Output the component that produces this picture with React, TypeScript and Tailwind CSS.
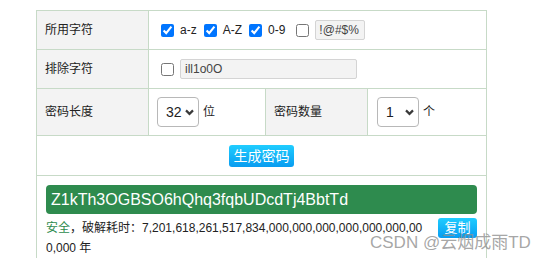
import { useState } from "react";

const font = "font-['Liberation_Sans','Noto_Sans_CJK_SC',sans-serif]";

function Chevron() {
  return (
    <svg width="9" height="7" viewBox="0 0 9 7" className="absolute right-[5px] top-[12px] pointer-events-none">
      <path d="M1 1.4 L4.5 4.9 L8 1.4" fill="none" stroke="#3a3a3a" strokeWidth="2.2" />
    </svg>
  );
}

function Select({ value, options, width }: { value: string; options: string[]; width: string }) {
  return (
    <div className={`relative inline-block ${width}`}>
      <select
        defaultValue={value}
        className="appearance-none w-full h-[30px] rounded-[4px] border border-[#b8b8b8] bg-white pl-[8px] text-[14px] text-[#222] outline-none"
      >
        {options.map((o) => (
          <option key={o}>{o}</option>
        ))}
      </select>
      <Chevron />
    </div>
  );
}

function Check({ on, onChange }: { on: boolean; onChange: () => void }) {
  return <input type="checkbox" checked={on} onChange={onChange} className="w-[13px] h-[13px] m-0 accent-[#0075ff]" />;
}

export default function App() {
  const [az, setAz] = useState(true);
  const [AZ, setAZ] = useState(true);
  const [num, setNum] = useState(true);
  const [sym, setSym] = useState(false);
  const [ex, setEx] = useState(false);

  const cell = "border border-[#c7dac7]";
  const label = `${cell} bg-[#f3f3f3] pl-[8px] text-[12px] text-[#222]`;

  return (
    <div className={`relative w-[560px] h-[258px] overflow-hidden bg-white ${font}`}>
      <table className="ml-[36px] mt-[10px] w-[450px] border-collapse table-fixed">
        <colgroup>
          <col className="w-[112px]" />
          <col className="w-[117px]" />
          <col className="w-[102px]" />
          <col className="w-[119px]" />
        </colgroup>
        <tbody>
          <tr className="h-[39px]">
            <td className={label}>所用字符</td>
            <td colSpan={3} className={`${cell} pl-[12px]`}>
              <div className="flex items-center text-[12px] text-[#222]">
                <Check on={az} onChange={() => setAz(!az)} />
                <span className="ml-[6px] mr-[7px]">a-z</span>
                <Check on={AZ} onChange={() => setAZ(!AZ)} />
                <span className="ml-[6px] mr-[7px]">A-Z</span>
                <Check on={num} onChange={() => setNum(!num)} />
                <span className="ml-[6px] mr-[11px]">0-9</span>
                <Check on={sym} onChange={() => setSym(!sym)} />
                <input
                  defaultValue="!@#$%"
                  className="ml-[6px] w-[50px] h-[20px] border border-[#d4d4d4] rounded-[2px] bg-[#f3f3f3] px-[3px] text-[12px] text-[#444]"
                />
              </div>
            </td>
          </tr>
          <tr className="h-[39px]">
            <td className={label}>排除字符</td>
            <td colSpan={3} className={`${cell} pl-[12px]`}>
              <div className="flex items-center">
                <Check on={ex} onChange={() => setEx(!ex)} />
                <input
                  defaultValue="ill1o0O"
                  className="ml-[6px] w-[177px] h-[20px] border border-[#d4d4d4] rounded-[2px] bg-[#f3f3f3] px-[4px] text-[12px] text-[#444]"
                />
              </div>
            </td>
          </tr>
          <tr className="h-[47px]">
            <td className={label}>密码长度</td>
            <td className={`${cell} pl-[8px]`}>
              <div className="flex items-center gap-[4px] text-[12px] text-[#222]">
                <Select value="32" options={["8", "16", "32", "64"]} width="w-[42px]" />
                <span>位</span>
              </div>
            </td>
            <td className={label}>密码数量</td>
            <td className={`${cell} pl-[9px]`}>
              <div className="flex items-center gap-[4px] text-[12px] text-[#222]">
                <Select value="1" options={["1", "5", "10"]} width="w-[42px]" />
                <span>个</span>
              </div>
            </td>
          </tr>
          <tr className="h-[40px]">
            <td colSpan={4} className={`${cell} text-center`}>
              <button className="w-[65px] h-[22px] rounded-[3px] bg-gradient-to-b from-[#20cdff] to-[#0a9cf0] text-white text-[14px] leading-[22px]">
                生成密码
              </button>
            </td>
          </tr>
          <tr>
            <td colSpan={4} className={`${cell} px-[9px] pt-[9px] pb-[9px] align-top`}>
              <div className="h-[29px] rounded-[4px] bg-[#2e8b4e] text-white text-[16px] leading-[29px] pl-[5px]">
                Z1kTh3OGBSO6hQhq3fqbUDcdTj4BbtTd
              </div>
              <div className="mt-[4px] text-[12px] leading-[20px] text-[#222] break-all">
                <button className="float-right ml-[12px] w-[39px] h-[20px] rounded-[3px] bg-gradient-to-b from-[#20cdff] to-[#0a9cf0] text-white text-[13px] leading-[20px]">
                  复制
                </button>
                <span className="text-[#2e8b4e]">安全</span>，破解耗时：7,201,618,261,517,834,000,000,000,000,000,000,000,000 年
              </div>
            </td>
          </tr>
        </tbody>
      </table>
      <div className="absolute left-[370px] top-[230px] text-[17px] text-[#8f8f8f]/80 whitespace-nowrap pointer-events-none">
        CSDN @云烟成雨TD
      </div>
    </div>
  );
}
